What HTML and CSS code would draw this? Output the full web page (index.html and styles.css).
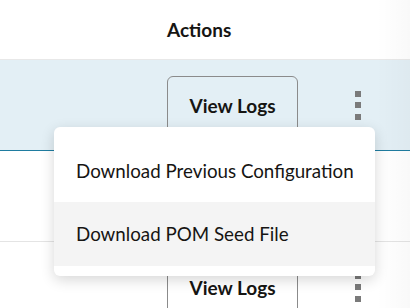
FILE: index.html
```html
<!DOCTYPE html>
<html lang="en">
<head>
  <meta charset="UTF-8">
  <meta name="viewport" content="width=device-width, initial-scale=1.0">
  <title>Actions</title>
  <link rel="stylesheet" href="styles.css">
</head>
<body>
  <div class="table">
    <div class="row header-row">
      <div class="actions-cell">Actions</div>
    </div>
    <div class="row selected">
      <div class="actions-cell">
        <button class="logs-button">View Logs</button>
        <button class="kebab"><span></span><span></span><span></span></button>
      </div>
    </div>
    <div class="row">
      <div class="actions-cell">
        <button class="logs-button">View Logs</button>
        <button class="kebab"><span></span><span></span><span></span></button>
      </div>
    </div>
    <div class="row">
      <div class="actions-cell">
        <button class="logs-button">View Logs</button>
        <button class="kebab"><span></span><span></span><span></span></button>
      </div>
    </div>

    <div class="sticky-shadow"></div>

    <ul class="menu">
      <li class="menu-item">Download Previous Configuration</li>
      <li class="menu-item hover">Download POM Seed File</li>
    </ul>
  </div>
</body>
</html>
```

FILE: styles.css
```css
body {
  margin: 0;
  font-family: Lato, "Noto Sans", sans-serif;
  color: #161513;
  background: #fff;
  overflow: hidden;
}
.table {
  position: relative;
  width: 410px;
  height: 308px;
  overflow: hidden;
}
.row {
  display: flex;
  align-items: center;
  height: 90px;
  border-bottom: 1px solid #e4e4e4;
}
.header-row {
  height: 59px;
  font-size: 19px;
  font-weight: bold;
  border-bottom-color: #e8e8e8;
}
.selected {
  background-color: #e3eff5;
  border-bottom-color: #1f7ca0;
}
.actions-cell {
  display: flex;
  align-items: center;
  margin-left: 167px;
}
.logs-button {
  width: 131px;
  height: 58px;
  border: 1px solid #8b8b8b;
  border-radius: 6px;
  background: transparent;
  font-family: inherit;
  font-size: 19px;
  font-weight: bold;
  color: #161513;
  padding: 0;
}
.kebab {
  display: flex;
  flex-direction: column;
  gap: 5.5px;
  margin-left: 57px;
  padding: 0;
  border: none;
  background: none;
}
.kebab span {
  width: 6px;
  height: 6px;
  background: #7a7a7a;
}
.sticky-shadow {
  position: absolute;
  top: 0;
  right: 0;
  width: 34px;
  height: 100%;
  background: linear-gradient(to right, rgba(0, 0, 0, 0), rgba(0, 0, 0, 0.025));
}
.menu {
  position: absolute;
  left: 54px;
  top: 127px;
  width: 321px;
  margin: 0;
  padding: 10px 0;
  list-style: none;
  background: #fff;
  border-radius: 6px;
  box-shadow: 0 4px 14px rgba(0, 0, 0, 0.16);
}
.menu-item {
  height: 64px;
  line-height: 64px;
  padding-left: 22px;
  font-size: 18.75px;
  white-space: nowrap;
}
.menu-item:first-child {
  height: 65px;
  line-height: 68px;
}
.hover {
  background: #f4f4f4;
}
```
